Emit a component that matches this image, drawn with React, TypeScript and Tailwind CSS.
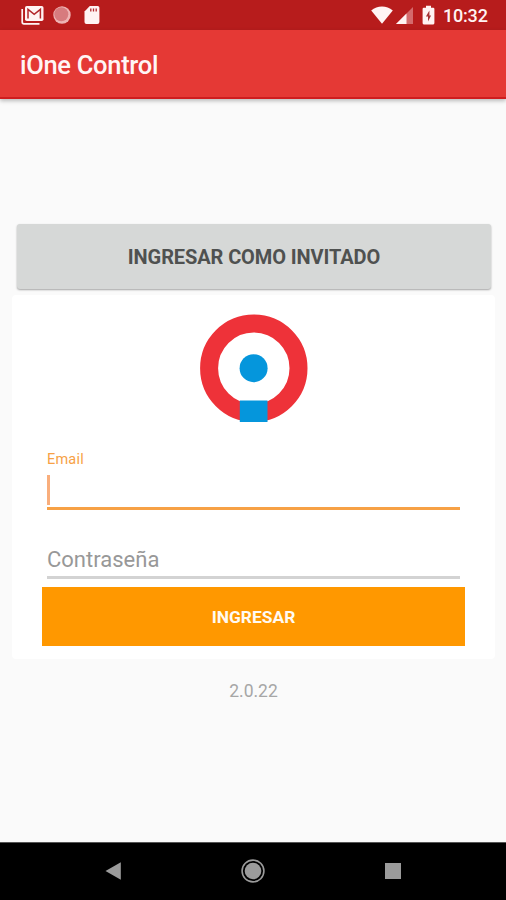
import React, { useState } from "react";

const StatusBar: React.FC = () => (
  <div className="flex h-[30px] shrink-0 items-center justify-between bg-[#b71c1c] pr-[18px] pl-[21px] text-[#fff3f3]">
    <div className="flex items-center">
      {/* mail */}
      <svg width="23" height="20" viewBox="0 0 23 20" fill="none">
        <path d="M1.2 4V17a1.8 1.8 0 0 0 1.8 1.8H18.5" stroke="currentColor" strokeWidth="1.7" />
        <rect x="4" y="1" width="18.5" height="15" rx="1.8" fill="currentColor" />
        <path d="M7 13.5V4.4l6.2 4.9 6.2-4.9v9.1" stroke="#b3262a" strokeWidth="1.5" />
      </svg>
      <svg className="ml-[9px]" width="18" height="18" viewBox="0 0 18 18">
        <circle cx="9" cy="9" r="8.7" fill="#eeb4b4" />
        <circle cx="8.3" cy="8.3" r="7" fill="#d77b7e" />
      </svg>
      {/* sd card */}
      <svg className="ml-[13px]" width="16" height="20" viewBox="0 0 16 20">
        <path d="M5.8 1H13.6Q15.4 1 15.4 2.8V17Q15.4 19 13.4 19H2.5Q.5 19 .5 17V6.5Z" fill="currentColor" />
        <path d="M6.8 3.5v3M9.5 3.5v3M12.2 3.5v3" stroke="#b3262a" strokeWidth="1.3" />
      </svg>
    </div>

    <div className="flex items-center">
      <svg width="22" height="18" viewBox="0 0 22 18">
        <path d="M.2 4.4Q5 .5 11 .5T21.8 4.4L11 17.8Z" fill="currentColor" />
      </svg>
      <svg className="ml-[3px]" width="17" height="17" viewBox="0 0 17 17">
        <path d="M17 0V17H0Z" fill="#d46a6c" />
        <path d="M10.5 6.5V17H0Z" fill="currentColor" />
      </svg>
      <svg className="ml-[9px]" width="13" height="20" viewBox="0 0 13 20">
        <path d="M4 .8H9V2.8H11.2Q12.4 2.8 12.4 4V18Q12.4 19.4 11.2 19.4H1.8Q.6 19.4 .6 18V4Q.6 2.8 1.8 2.8H4Z" fill="currentColor" />
        <path d="M7.4 5.5 3.9 11.6H6V16.5L9.1 10.4H7.4Z" fill="#a63235" />
      </svg>
      <span className="ml-[8px] w-[45px] pt-[2px] text-[18px] leading-[20px] font-medium tracking-[-0.2px] whitespace-nowrap">10:32</span>
    </div>
  </div>
);

const NavBar: React.FC = () => (
  <div className="flex h-[58px] shrink-0 items-center justify-between border-t border-[#555] bg-black pr-[105px] pb-[2px] pl-[105px] text-[#9b9b9b]">
    <svg width="16" height="18" viewBox="0 0 16 18">
      <path d="M.5 9 15.8.3V17.7Z" fill="currentColor" />
    </svg>
    <svg width="24" height="24" viewBox="0 0 24 24">
      <circle cx="12" cy="12" r="10.9" fill="none" stroke="currentColor" strokeWidth="1.6" />
      <circle cx="12" cy="12" r="8.3" fill="currentColor" />
    </svg>
    <div className="h-4 w-4 bg-[#9b9b9b]" />
  </div>
);

const Logo: React.FC = () => (
  <svg className="mx-auto" width="108" height="109" viewBox="0 0 108 109">
    <circle cx="53.8" cy="54.2" r="44.7" fill="none" stroke="#ee3239" strokeWidth="18" />
    <circle cx="53.6" cy="54.2" r="14" fill="#0596dc" />
    <rect x="39.8" y="86.5" width="27.7" height="21.5" fill="#0596dc" />
  </svg>
);

const App: React.FC = () => {
  const [email, setEmail] = useState("");
  const [password, setPassword] = useState("");

  return (
    <div className="flex h-[900px] w-[506px] flex-col overflow-hidden bg-[#fafafa] font-['Roboto',sans-serif]">
      <StatusBar />

      <header className="z-10 flex h-[69px] shrink-0 items-center border-b-2 border-[#cf1d1f] bg-[#e53935] pl-[20px] shadow-[0_2px_4px_rgba(0,0,0,0.25)]">
        <h1 className="pt-[2px] text-[25.5px] leading-[30px] font-medium tracking-[-0.3px] text-[#fff5f5]">iOne Control</h1>
      </header>

      <main className="flex flex-1 flex-col pt-[125px]">
        <button className="mr-[15px] ml-[17px] h-[65px] shrink-0 rounded-[3px] bg-[#d6d8d7] text-[20px] font-bold tracking-[-0.1px] text-[#4f5150] shadow-[0_1px_2px_rgba(0,0,0,0.35)]">
          INGRESAR COMO INVITADO
        </button>

        <form
          className="mt-[6px] mr-[11px] ml-[12px] flex h-[364px] shrink-0 flex-col rounded-[4px] bg-white pt-[19px]"
          onSubmit={(e) => e.preventDefault()}
        >
          <Logo />

          <div className="mr-[35px] ml-[35px] mt-[27px] flex h-[60px] flex-col border-b-[3px] border-[#f7a145]">
            <label htmlFor="email" className="pt-px text-[14.5px] leading-[18px] tracking-[0.2px] text-[#f7a145]">
              Email
            </label>
            <div className="mt-[6px] flex h-[30px]">
              <div className="w-[2.5px] bg-[#f9ae7c]" />
              <input
                id="email"
                value={email}
                onChange={(e) => setEmail(e.target.value)}
                className="flex-1 text-[22px] caret-transparent outline-none"
              />
            </div>
          </div>

          <input
            type="password"
            placeholder="Contraseña"
            value={password}
            onChange={(e) => setPassword(e.target.value)}
            className="mx-[35px] mt-[32px] h-[37px] border-b-[3px] border-[#d3d3d3] text-[22px] outline-none placeholder:text-[#989898]"
          />

          <button className="mt-[8px] mr-[30px] ml-[30px] h-[59px] bg-[#ff9800] pt-[2px] text-[17.4px] font-bold text-[#fffaf2]">
            INGRESAR
          </button>
        </form>

        <p className="mt-[20px] pl-px text-center text-[17.5px] leading-[24px] text-[#a6a6a6]">2.0.22</p>
      </main>

      <NavBar />
    </div>
  );
};

export default App;
